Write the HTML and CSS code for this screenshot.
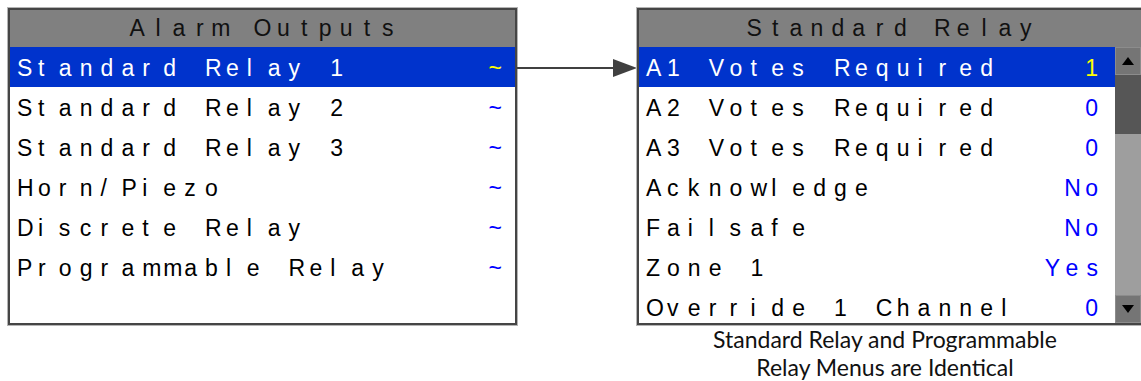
FILE: index.html
```html
<!DOCTYPE html>
<html>
<head>
  <meta charset="UTF-8">
  <title>Alarm Outputs</title>
  <link rel="stylesheet" href="styles.css">
</head>
<body>
<div class="screen">
  <div class="menu menu-left">
    <div class="menu-title"><span class="lcd">Alarm Outputs</span></div>
    <div class="row sel"><span class="lcd">Standard Relay 1</span><span class="val lcd">~</span></div>
    <div class="row"><span class="lcd">Standard Relay 2</span><span class="val lcd">~</span></div>
    <div class="row"><span class="lcd">Standard Relay 3</span><span class="val lcd">~</span></div>
    <div class="row"><span class="lcd">Horn/Piezo</span><span class="val lcd">~</span></div>
    <div class="row"><span class="lcd">Discrete Relay</span><span class="val lcd">~</span></div>
    <div class="row"><span class="lcd">Programmable Relay</span><span class="val lcd">~</span></div>
  </div>

  <div class="link">
    <span class="link-line"></span>
    <span class="link-head"></span>
  </div>

  <div class="right-col">
    <div class="menu menu-right">
      <div class="menu-title"><span class="lcd">Standard Relay</span></div>
      <div class="menu-body">
        <div class="list">
          <div class="row sel"><span class="lcd">A1 Votes Required</span><span class="val lcd">1</span></div>
          <div class="row"><span class="lcd">A2 Votes Required</span><span class="val lcd">0</span></div>
          <div class="row"><span class="lcd">A3 Votes Required</span><span class="val lcd">0</span></div>
          <div class="row"><span class="lcd">Acknowledge</span><span class="val lcd">No</span></div>
          <div class="row"><span class="lcd">Failsafe</span><span class="val lcd">No</span></div>
          <div class="row"><span class="lcd">Zone 1</span><span class="val lcd">Yes</span></div>
          <div class="row"><span class="lcd">Override 1 Channel</span><span class="val lcd">0</span></div>
        </div>
        <div class="scrollbar">
          <div class="sb-btn"><span class="tri-up"></span></div>
          <div class="sb-thumb"></div>
          <div class="sb-track"></div>
          <div class="sb-btn"><span class="tri-down"></span></div>
        </div>
      </div>
    </div>
    <p class="caption">Standard Relay and Programmable<br>Relay Menus are Identical</p>
  </div>
</div>

<script src="script.js"></script>
</body>
</html>
```

FILE: styles.css
```css
body {
  margin: 0;
  background-color: #fff;
  font-family: "Liberation Sans", Arial, sans-serif;
  overflow: hidden;
}

.screen {
  display: flex;
  align-items: flex-start;
  width: 1133px;
  height: 373px;
  padding: 8px 0 0 8px;
  overflow: hidden;
}

.menu {
  flex-shrink: 0;
  border: 2px solid #454545;
  background-color: #fff;
  box-shadow: 0 0 0 1px #b4b4b4;
}

.menu-left {
  width: 505px;
  height: 313px;
}

.menu-right {
  width: 502px;
}

.menu-title {
  height: 37px;
  line-height: 37px;
  background-color: #808080;
  color: #111;
  font-size: 23px;
  text-align: center;
  white-space: nowrap;
}

.row {
  display: flex;
  justify-content: space-between;
  height: 40px;
  box-sizing: border-box;
  padding: 3px 13px 0 7px;
  line-height: 37px;
  font-size: 23px;
  color: #000;
  white-space: nowrap;
}

.row.sel {
  background-color: #0033cc;
  color: #fff;
}

.val {
  color: #0000ff;
}

.row.sel .val {
  color: #ffff00;
}

/* one fixed-pitch cell per character, like the LCD font */
.ch {
  display: inline-block;
  width: 20.9px;
  white-space: pre;
}

.val .ch:last-child {
  width: auto;
}

.menu-body {
  display: flex;
  height: 276px;
}

.list {
  flex: 1;
  overflow: hidden;
}

.menu-right .row {
  padding-right: 17px;
}

.scrollbar {
  display: flex;
  flex-direction: column;
  width: 26px;
  background-color: #9e9e9e;
}

.sb-btn {
  display: flex;
  align-items: center;
  justify-content: center;
  height: 28px;
  box-sizing: border-box;
  background-color: #757575;
  border: 1px solid #8c8c8c;
}

.sb-thumb {
  height: 59px;
  background-color: #565656;
}

.sb-track {
  flex: 1;
}

.tri-up,
.tri-down {
  width: 0;
  height: 0;
  border-left: 6px solid transparent;
  border-right: 6px solid transparent;
}

.tri-up {
  border-bottom: 8px solid #000;
}

.tri-down {
  border-top: 8px solid #000;
}

.link {
  display: flex;
  flex-shrink: 0;
  align-items: center;
  width: 120px;
  height: 18px;
  margin-top: 51px;
}

.link-line {
  flex: 1;
  height: 2px;
  background-color: #404040;
}

.link-head {
  width: 0;
  height: 0;
  border-left: 24px solid #404040;
  border-top: 9px solid transparent;
  border-bottom: 9px solid transparent;
}

.right-col {
  display: flex;
  flex-shrink: 0;
  flex-direction: column;
  align-items: center;
}

.caption {
  margin: 0 10px 0 0;
  font-family: Lato, "Liberation Sans", sans-serif;
  font-size: 23px;
  line-height: 28px;
  color: #111;
  text-align: center;
}
```

FILE: script.js
```js
// split the display text into fixed-pitch character cells
var items = document.querySelectorAll('.lcd');

for (var i = 0; i < items.length; i++) {
  var el = items[i];
  var text = el.textContent;
  el.textContent = '';

  for (var j = 0; j < text.length; j++) {
    var cell = document.createElement('span');
    cell.className = 'ch';
    cell.textContent = text[j];
    el.appendChild(cell);
  }
}
```
